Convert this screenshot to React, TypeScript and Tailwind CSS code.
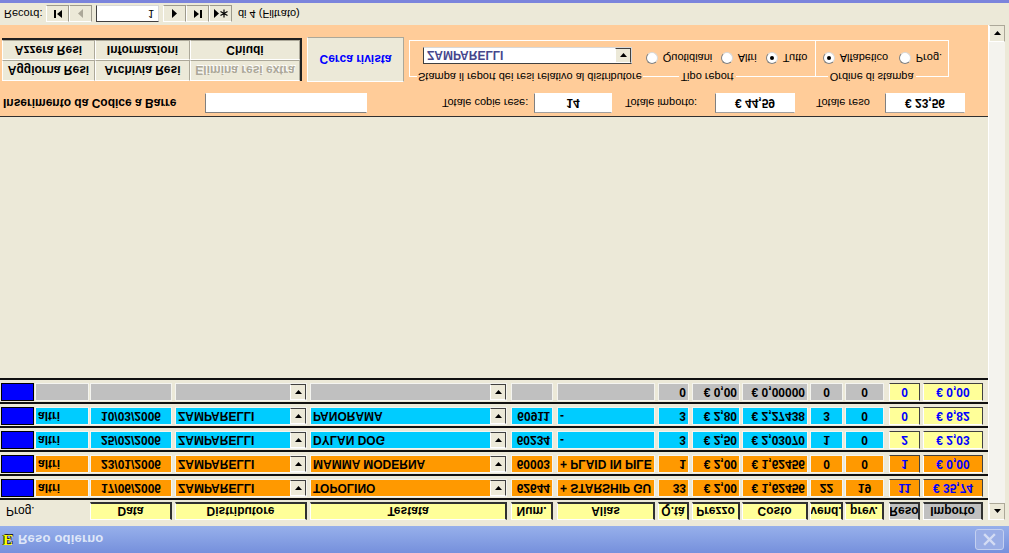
import React from "react";

const C = {
  prog: "ml-[1px] w-[33px]",
  tipo: "ml-[1px] w-[54px]",
  data: "ml-[1px] w-[82px]",
  distr: "ml-[3px] w-[132px]",
  test: "ml-[3px] w-[197px]",
  num: "ml-[4px] w-[42px]",
  alias: "ml-[4px] w-[98px]",
  qta: "ml-[3px] w-[31px]",
  prezzo: "ml-[3px] w-[48px]",
  costo: "ml-[2px] w-[66px]",
  vend: "ml-[2px] w-[33px]",
  prev: "ml-[2px] w-[39px]",
  reso: "ml-[5px] w-[31px]",
  imp: "ml-[3px] w-[60px]",
};

const TriDown = ({ color = "#000" }: { color?: string }) => (
  <svg width="7" height="4" viewBox="0 0 7 4">
    <path d="M0 0H7L3.5 4Z" fill={color} />
  </svg>
);
const TriUp = () => (
  <svg width="7" height="4" viewBox="0 0 7 4">
    <path d="M0 4H7L3.5 0Z" fill="#000" />
  </svg>
);

function Cell({
  col,
  bg,
  align = "justify-start",
  text = "text-black",
  children,
  combo,
}: {
  col: string;
  bg: string;
  align?: string;
  text?: string;
  children?: React.ReactNode;
  combo?: boolean;
}) {
  return (
    <div
      className={`${col} ${bg} ${text} h-[18px] shrink-0 flex items-center border border-[#f4f4f0] overflow-hidden`}
    >
      <div className={`flex-1 min-w-0 flex ${align} px-[2px] whitespace-nowrap overflow-hidden text-[12px] font-bold leading-[16px]`}>
        {children}
      </div>
      {combo && (
        <div className="w-[16px] h-[16px] shrink-0 bg-[#ECE9D8] border-l border-t border-white border-r border-b border-r-[#404040] border-b-[#404040] flex items-center justify-center">
          <TriDown />
        </div>
      )}
    </div>
  );
}

function RaisedCell({
  col,
  bg,
  children,
}: {
  col: string;
  bg: string;
  children?: React.ReactNode;
}) {
  return (
    <div
      className={`${col} ${bg} h-[18px] shrink-0 flex items-center justify-center border border-t-white border-l-white border-r-[#404040] border-b-[#404040] text-[#0000FF] text-[12px] font-bold leading-[16px] whitespace-nowrap overflow-hidden`}
    >
      {children}
    </div>
  );
}

type Row = {
  bg: string;
  rbg: string;
  tipo: string;
  data: string;
  distr: string;
  test: string;
  num: string;
  alias: string;
  qta: string;
  prezzo: string;
  costo: string;
  vend: string;
  prev: string;
  reso: string;
  imp: string;
};

const rows: Row[] = [
  {
    bg: "bg-[#FF9900]",
    rbg: "bg-[#FF9900]",
    tipo: "altri",
    data: "17/06/2006",
    distr: "ZAMPARELLI",
    test: "TOPOLINO",
    num: "62644",
    alias: "+ STARSHIP GU",
    qta: "33",
    prezzo: "€ 2,00",
    costo: "€ 1,62456",
    vend: "22",
    prev: "19",
    reso: "11",
    imp: "€ 35,74",
  },
  {
    bg: "bg-[#FF9900]",
    rbg: "bg-[#FF9900]",
    tipo: "altri",
    data: "23/01/2006",
    distr: "ZAMPARELLI",
    test: "MAMMA MODERNA",
    num: "60003",
    alias: "+ PLAID IN PILE",
    qta: "1",
    prezzo: "€ 2,00",
    costo: "€ 1,62456",
    vend: "0",
    prev: "0",
    reso: "1",
    imp: "€ 0,00",
  },
  {
    bg: "bg-[#00CCFF]",
    rbg: "bg-[#FFFF99]",
    tipo: "altri",
    data: "25/02/2006",
    distr: "ZAMPARELLI",
    test: "DYLAN DOG",
    num: "60234",
    alias: "-",
    qta: "3",
    prezzo: "€ 2,50",
    costo: "€ 2,03070",
    vend: "1",
    prev: "0",
    reso: "2",
    imp: "€ 2,03",
  },
  {
    bg: "bg-[#00CCFF]",
    rbg: "bg-[#FFFF99]",
    tipo: "altri",
    data: "10/03/2006",
    distr: "ZAMPARELLI",
    test: "PANORAMA",
    num: "60911",
    alias: "-",
    qta: "3",
    prezzo: "€ 2,80",
    costo: "€ 2,27438",
    vend: "3",
    prev: "0",
    reso: "0",
    imp: "€ 6,82",
  },
  {
    bg: "bg-[#C0C0C0]",
    rbg: "bg-[#FFFF99]",
    tipo: "",
    data: "",
    distr: "",
    test: "",
    num: "",
    alias: "",
    qta: "0",
    prezzo: "€ 0,00",
    costo: "€ 0,00000",
    vend: "0",
    prev: "0",
    reso: "0",
    imp: "€ 0,00",
  },
];

function DataRow({ r }: { r: Row }) {
  return (
    <div className="h-[24px] border-t-2 border-[#101010] pt-[1px] flex items-start">
      <div className={`${C.prog} h-[18px] shrink-0 bg-[#0000FF] border border-black`} />
      <Cell col={C.tipo} bg={r.bg}>{r.tipo}</Cell>
      <Cell col={C.data} bg={r.bg} align="justify-center">{r.data}</Cell>
      <Cell col={C.distr} bg={r.bg} combo>{r.distr}</Cell>
      <Cell col={C.test} bg={r.bg} combo>{r.test}</Cell>
      <Cell col={C.num} bg={r.bg} align="justify-end">{r.num}</Cell>
      <Cell col={C.alias} bg={r.bg}>{r.alias}</Cell>
      <Cell col={C.qta} bg={r.bg} align="justify-end">{r.qta}</Cell>
      <Cell col={C.prezzo} bg={r.bg} align="justify-end">{r.prezzo}</Cell>
      <Cell col={C.costo} bg={r.bg} align="justify-end">{r.costo}</Cell>
      <Cell col={C.vend} bg={r.bg} align="justify-center">{r.vend}</Cell>
      <Cell col={C.prev} bg={r.bg} align="justify-center">{r.prev}</Cell>
      <RaisedCell col={C.reso} bg={r.rbg}>{r.reso}</RaisedCell>
      <RaisedCell col={C.imp} bg={r.rbg}>{r.imp}</RaisedCell>
    </div>
  );
}

function Head({ col, bg = "bg-[#FFFF99]", children }: { col: string; bg?: string; children: React.ReactNode }) {
  return (
    <div
      className={`${col} ${bg} h-[18px] shrink-0 flex items-center justify-center border border-t-white border-l-white border-r-2 border-b-2 border-r-[#303030] border-b-[#303030] text-[12px] font-bold leading-[14px] whitespace-nowrap overflow-hidden`}
    >
      {children}
    </div>
  );
}

function Radio({ checked }: { checked?: boolean }) {
  return (
    <span className="w-[12px] h-[12px] shrink-0 rounded-full bg-white border border-t-[#808080] border-l-[#808080] border-r-[#d8d8d8] border-b-[#d8d8d8] flex items-center justify-center">
      {checked && <span className="w-[4px] h-[4px] rounded-full bg-black" />}
    </span>
  );
}

function NavBtn({ children }: { children: React.ReactNode }) {
  return (
    <div className="w-[23px] h-[17px] shrink-0 bg-[#ECE9D8] border border-t-white border-l-white border-r-[#9d9a8c] border-b-[#9d9a8c] flex items-center justify-center">
      {children}
    </div>
  );
}

function Btn({ w, children, disabled }: { w: string; children: React.ReactNode; disabled?: boolean }) {
  return (
    <div
      className={`${w} h-full shrink-0 bg-[#ECE9D8] border border-t-white border-l-white border-r-[#aca899] border-b-[#aca899] flex items-center justify-center text-[12px] font-bold whitespace-nowrap ${
        disabled ? "text-[#aca899] [text-shadow:1px_1px_0_#ffffff]" : "text-black"
      }`}
    >
      {children}
    </div>
  );
}

export default function App() {
  return (
    <div className="w-[1009px] h-[553px] overflow-hidden [transform:scaleY(-1)] bg-[#ECE9D8] flex flex-col font-['Liberation_Sans',Arial,sans-serif] text-black select-none">
      {/* Title bar */}
      <div className="h-[27px] shrink-0 bg-linear-to-b from-[#7690dc] to-[#97b0eb] flex items-center">
        <span className="ml-[3px] w-[10px] text-[15px] font-bold font-['Liberation_Serif',serif] text-[#ffff00] [text-shadow:-1px_0_0_#202020,1px_1px_0_#202020] leading-none">
          E
        </span>
        <span className="ml-[5px] text-[13px] font-bold text-[#dfe7f8] tracking-[0.2px]">Reso odierno</span>
        <div className="ml-auto mr-[5px] w-[29px] h-[21px] rounded-[3px] bg-[#9aaee6] border border-[#c4d0f0] flex items-center justify-center">
          <svg width="13" height="13" viewBox="0 0 13 13">
            <path d="M2 2L11 11M11 2L2 11" stroke="#d4dcf4" strokeWidth="2.4" strokeLinecap="square" />
          </svg>
        </div>
      </div>

      {/* Body */}
      <div className="h-[501px] shrink-0 flex">
        <div className="w-[988px] shrink-0 flex flex-col">
          {/* Header labels */}
          <div className="h-[26px] shrink-0 pt-[6px] flex items-start">
            <div className="w-[89px] h-[18px] shrink-0 flex items-center pl-[6px] text-[12px]">Prog.</div>
            <Head col={C.data}>Data</Head>
            <Head col={C.distr}>Distributore</Head>
            <Head col={C.test}>Testata</Head>
            <Head col={C.num}>Num.</Head>
            <Head col={C.alias}>Alias</Head>
            <Head col={C.qta}>Q.tà</Head>
            <Head col={C.prezzo}>Prezzo</Head>
            <Head col={C.costo}>Costo</Head>
            <Head col={C.vend}>vend.</Head>
            <Head col={C.prev}>prev.</Head>
            <Head col={C.reso} bg="bg-[#C0C0C0]">Reso</Head>
            <Head col={C.imp} bg="bg-[#C0C0C0]">Importo</Head>
          </div>

          {rows.map((r, i) => (
            <DataRow key={i} r={r} />
          ))}
          <div className="h-[2px] shrink-0 bg-[#101010]" />

          <div className="flex-1" />

          {/* Footer */}
          <div className="h-[92px] shrink-0 bg-[#FFCC99] border-t border-[#303030] flex flex-col">
            <div className="mt-[3px] h-[20px] flex items-center">
              <span className="ml-[3px] w-[202px] shrink-0 text-[12px] font-bold whitespace-nowrap">
                Inserimento da Codice a Barre
              </span>
              <div className="w-[162px] h-[20px] shrink-0 bg-white border border-t-[#808080] border-l-[#808080] border-r-white border-b-white" />
              <span className="ml-[75px] w-[92px] shrink-0 text-[11px] whitespace-nowrap">Totale copie rese:</span>
              <div className="w-[78px] h-[20px] shrink-0 bg-white border border-t-[#a0a0a0] border-l-[#808080] border-r-white border-b-white flex items-center justify-center text-[12px] font-bold">
                14
              </div>
              <span className="ml-[13px] w-[90px] shrink-0 text-[11px] whitespace-nowrap">Totale importo:</span>
              <div className="w-[80px] h-[20px] shrink-0 bg-white border border-t-[#a0a0a0] border-l-[#808080] border-r-white border-b-white flex items-center justify-center text-[12px] font-bold">
                € 44,59
              </div>
              <span className="ml-[21px] w-[69px] shrink-0 text-[11px] whitespace-nowrap">Totale reso</span>
              <div className="w-[80px] h-[20px] shrink-0 bg-white border border-t-[#a0a0a0] border-l-[#808080] border-r-white border-b-white flex items-center justify-center text-[12px] font-bold">
                € 23,56
              </div>
            </div>

            <div className="mt-[11px] flex items-start">
              {/* Buttons block */}
              <div className="mt-[1px] ml-[2px] w-[300px] h-[43px] shrink-0 flex flex-col border-r-2 border-b-2 border-[#202020]">
                <div className="h-[21px] flex">
                  <Btn w="w-[93px]">Aggiorna Resi</Btn>
                  <Btn w="w-[95px]">Archivia Resi</Btn>
                  <Btn w="w-[110px]" disabled>
                    Elimina resi extra
                  </Btn>
                </div>
                <div className="h-[20px] flex">
                  <Btn w="w-[93px]">Azzera Resi</Btn>
                  <Btn w="w-[95px]">Informazioni</Btn>
                  <Btn w="w-[110px]">Chiudi</Btn>
                </div>
              </div>

              {/* Cerca rivista */}
              <div className="ml-[5px] w-[97px] h-[45px] shrink-0 bg-[#ECE9D8] border border-t-white border-l-white border-r-[#aca899] border-b-[#aca899] flex items-center justify-center text-[12px] font-bold text-[#0000FF]">
                Cerca rivista
              </div>

              {/* Stampa fieldset */}
              <fieldset className="-mt-[1px] ml-[5px] w-[231px] h-[43px] shrink-0 border border-r-0 border-white p-0 m-0">
                <legend className="ml-[7px] px-[1px] text-[11px] leading-[13px] whitespace-nowrap">
                  Stampa il report dei resi relativo al distributore
                </legend>
                <div className="ml-[13px] mt-[6px] w-[209px] h-[17px] bg-white border border-t-[#404040] border-l-[#404040] border-r-[#d8d8d8] border-b-[#d8d8d8] flex items-center">
                  <span className="flex-1 pl-[3px] text-[12px] font-bold text-[#46468c] leading-none">ZAMPARELLI</span>
                  <div className="w-[16px] h-[15px] bg-[#ECE9D8] border border-t-white border-l-white border-r-[#404040] border-b-[#404040] flex items-center justify-center">
                    <TriDown />
                  </div>
                </div>
              </fieldset>

              {/* Tipo report */}
              <fieldset className="-mt-[1px] w-[173px] h-[43px] shrink-0 border border-l-0 border-white p-0 m-0">
                <legend className="ml-[36px] px-[2px] text-[11px] leading-[13px] whitespace-nowrap">Tipo report</legend>
                <div className="mt-[6px] h-[12px] flex items-center text-[11px]">
                  <div className="ml-[3px] w-[75px] flex items-center shrink-0">
                    <Radio />
                    <span className="ml-[5px]">Quotidiani</span>
                  </div>
                  <div className="w-[45px] flex items-center shrink-0">
                    <Radio />
                    <span className="ml-[5px]">Altri</span>
                  </div>
                  <div className="flex items-center shrink-0">
                    <Radio checked />
                    <span className="ml-[5px]">Tutto</span>
                  </div>
                </div>
              </fieldset>

              {/* Ordine di stampa */}
              <fieldset className="-mt-[1px] -ml-[1px] w-[134px] h-[43px] shrink-0 border border-white p-0 m-0">
                <legend className="ml-[12px] px-[2px] text-[11px] leading-[13px] whitespace-nowrap">Ordine di stampa</legend>
                <div className="mt-[6px] h-[12px] flex items-center text-[11px]">
                  <div className="ml-[7px] w-[76px] flex items-center shrink-0">
                    <Radio checked />
                    <span className="ml-[5px]">Alfabetico</span>
                  </div>
                  <div className="flex items-center shrink-0">
                    <Radio />
                    <span className="ml-[5px]">Prog.</span>
                  </div>
                </div>
              </fieldset>
            </div>
          </div>
        </div>

        {/* Scrollbar */}
        <div className="w-[17px] shrink-0 mt-[6px] flex flex-col bg-[#f4f3ee] border-l border-white">
          <div className="h-[17px] shrink-0 bg-[#ECE9D8] border border-t-white border-l-white border-r-[#aca899] border-b-[#aca899] flex items-center justify-center">
            <TriUp />
          </div>
          <div className="flex-1" />
          <div className="h-[17px] shrink-0 bg-[#ECE9D8] border border-t-white border-l-white border-r-[#aca899] border-b-[#aca899] flex items-center justify-center">
            <TriDown />
          </div>
        </div>
        <div className="w-[4px] shrink-0 bg-[#ECE9D8]" />
      </div>

      {/* Record navigation */}
      <div className="h-[22px] shrink-0 flex items-center text-[11px]">
        <span className="ml-[4px] w-[42px] shrink-0">Record:</span>
        <NavBtn>
          <svg width="8" height="8" viewBox="0 0 8 8">
            <rect x="0" y="0" width="2" height="8" fill="#000" />
            <path d="M8 0V8L3 4Z" fill="#000" />
          </svg>
        </NavBtn>
        <NavBtn>
          <svg width="6" height="9" viewBox="0 0 6 9">
            <path d="M5 0V9L0 4.5Z" fill="#aca899" />
          </svg>
        </NavBtn>
        <div className="ml-[4px] w-[63px] h-[17px] shrink-0 bg-white border border-t-[#404040] border-l-[#404040] border-r-[#d8d8d8] border-b-[#d8d8d8] flex items-center justify-end pr-[4px]">
          1
        </div>
        <div className="ml-[4px] flex">
          <NavBtn>
            <svg width="6" height="9" viewBox="0 0 6 9">
              <path d="M0 0V9L5 4.5Z" fill="#000" />
            </svg>
          </NavBtn>
          <NavBtn>
            <svg width="8" height="8" viewBox="0 0 8 8">
              <path d="M0 0V8L5 4Z" fill="#000" />
              <rect x="6" y="0" width="2" height="8" fill="#000" />
            </svg>
          </NavBtn>
          <NavBtn>
            <svg width="14" height="9" viewBox="0 0 14 9">
              <path d="M0 0V9L5 4.5Z" fill="#000" />
              <path d="M10 0.5V8.5M6.5 2.5L13.5 6.5M13.5 2.5L6.5 6.5" stroke="#000" strokeWidth="1.2" />
            </svg>
          </NavBtn>
        </div>
        <span className="ml-[6px] whitespace-nowrap">di 4 (Filtrato)</span>
      </div>
      <div className="h-[3px] shrink-0 bg-[#7b84dc]" />
    </div>
  );
}
